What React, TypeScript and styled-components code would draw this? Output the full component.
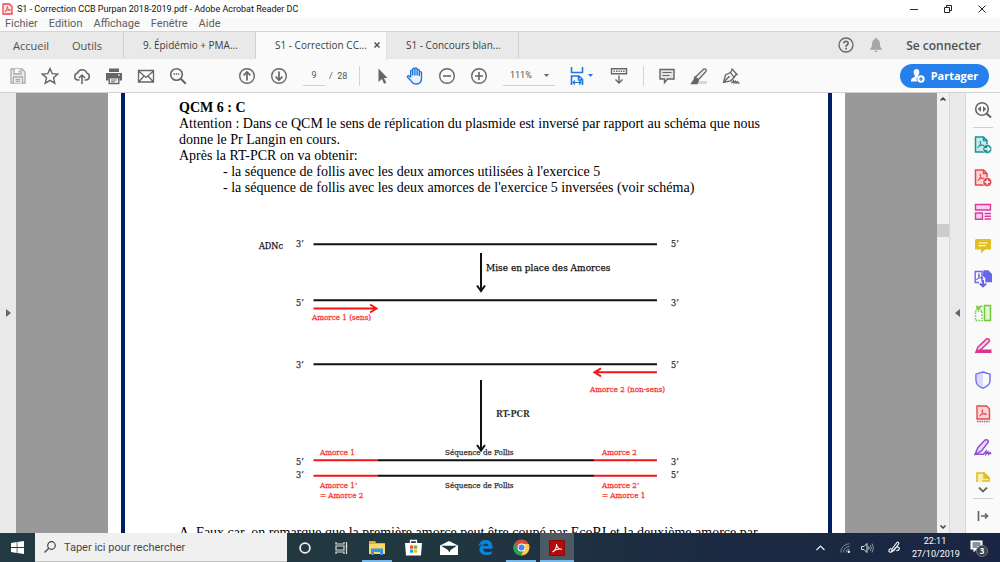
import React from "react";
import styled, { createGlobalStyle } from "styled-components";

const GlobalStyle = createGlobalStyle`
  * { box-sizing: border-box; }
  html, body { margin: 0; padding: 0; }
  body { font-family: "Open Sans", "Noto Sans", sans-serif; color: #4b4b4b; background: #fafafa; }
  button, input, select { font: inherit; color: inherit; margin: 0; padding: 0; border: 0; background: none; border-radius: 0; }
  a { color: inherit; text-decoration: none; }
  svg { display: block; flex: none; }
  p, h2, ul { margin: 0; padding: 0; }
`;

const Shell = styled.div`
  display: flex;
  flex-direction: column;
  height: 100vh;
  overflow: hidden;
`;

/* ---------- window chrome ---------- */

const TitleBar = styled.header`
  display: flex;
  align-items: center;
  height: 17px;
  padding: 0 1px 0 2px;
  background: #fff;
  color: #111;
  font-family: Roboto, sans-serif;
  font-size: 9px;
  gap: 4px;
`;

const WindowTitle = styled.span`
  flex: 1;
  white-space: nowrap;
`;

const WindowButtons = styled.div`
  display: flex;
`;

const WindowButton = styled.button`
  display: flex;
  align-items: center;
  justify-content: center;
  width: 34px;
  height: 16px;
`;

const MenuBar = styled.nav`
  display: flex;
  align-items: center;
  height: 14px;
  padding-left: 5px;
  gap: 11px;
  font-family: Roboto, sans-serif;
  font-size: 11px;
  line-height: 14px;
  color: #606060;
`;

const TabBar = styled.div`
  display: flex;
  align-items: stretch;
  height: 28px;
  border-top: 1px solid #d4d4d4;
  border-bottom: 1px solid #e4e4e4;
  background: #e9e9e9;
`;

const HomeTabs = styled.div`
  display: flex;
  align-items: center;
  width: 124px;
  padding-left: 13px;
  gap: 23px;
  border-right: 1px solid #d0d0d0;
`;

const HomeTab = styled.button`
  font-size: 11px;
  color: #505050;
`;

const Tab = styled.button<{ $active?: boolean }>`
  display: flex;
  align-items: center;
  width: ${(p) => (p.$active ? 131 : 132)}px;
  height: ${(p) => (p.$active ? 28 : 26)}px;
  padding: 0 0 ${(p) => (p.$active ? 2 : 0)}px 19px;
  gap: 7px;
  white-space: nowrap;
  background: ${(p) => (p.$active ? "#fafafa" : "#e9e9e9")};
  border-right: 1px solid ${(p) => (p.$active ? "#e0e0e0" : "#d0d0d0")};
  font-size: 10px;
  color: #404040;
`;

const AccountArea = styled.div`
  display: flex;
  align-items: center;
  margin-left: auto;
  padding-right: 19px;
  gap: 15px;
`;

const SignIn = styled.button`
  margin-left: 8px;
  font-size: 12px;
  font-weight: 600;
  color: #505050;
`;

/* ---------- toolbar ---------- */

const Toolbar = styled.div`
  display: flex;
  align-items: center;
  height: 34px;
  padding: 0 11px 0 2px;
  border-bottom: 1px solid #d2d2d2;
  color: #555;
  font-family: Roboto, sans-serif;
  font-size: 9px;
`;

const ToolGroup = styled.div<{ $start?: number }>`
  display: flex;
  align-items: center;
  margin-left: ${(p) => p.$start ?? 0}px;
`;

const ToolButton = styled.button<{ $wide?: boolean }>`
  display: flex;
  align-items: center;
  justify-content: center;
  width: ${(p) => (p.$wide ? 44 : 32)}px;
  height: 32px;
  gap: 4px;
`;

const PageInput = styled.input`
  width: 22px;
  height: 20px;
  border-bottom: 1px solid #d0d0d0;
  text-align: center;
`;

const PageCount = styled.span`
  width: 34px;
  padding-left: 4px;
  white-space: pre;
`;

const Divider = styled.span`
  width: 1px;
  height: 20px;
  background: #d4d4d4;
`;

const ZoomField = styled.label`
  display: flex;
  align-items: center;
  width: 52px;
  height: 20px;
  margin: 0 4px 0 8px;
  padding: 0 6px 0 7px;
  border-bottom: 1px solid #d0d0d0;
`;

const ZoomSelect = styled.select`
  appearance: none;
  flex: 1;
  width: 30px;
  outline: none;
`;

const ShareButton = styled.button`
  display: flex;
  align-items: center;
  justify-content: center;
  width: 89px;
  height: 24px;
  margin-left: auto;
  gap: 6px;
  border-radius: 12px;
  background: #2680eb;
  color: #fff;
  font-family: "Open Sans", sans-serif;
  font-size: 11px;
  font-weight: 700;
`;

/* ---------- document ---------- */

const Workspace = styled.div`
  display: flex;
  flex: 1;
  min-height: 0;
`;

const PanelHandle = styled.button<{ $side: "left" | "right" }>`
  display: flex;
  align-items: center;
  justify-content: center;
  width: ${(p) => (p.$side === "left" ? 16 : 17)}px;
  background: #e9e9e9;
  border-left: ${(p) => (p.$side === "right" ? "1px solid #d6d6d6" : "0")};
  border-right: ${(p) => (p.$side === "right" ? "1px solid #d6d6d6" : "0")};
`;

const Viewer = styled.main`
  display: flex;
  flex: 1;
  justify-content: center;
  min-width: 0;
  overflow: hidden;
  background: #999;
`;

const Page = styled.article`
  flex: 0 1 737px;
  padding: 0 13px;
  background: #fff;
`;

const PageFrame = styled.div`
  min-height: 100%;
  padding: 7px 50px 0 54px;
  border: solid #001f60;
  border-width: 0 4px;
  color: #000;
  font-family: "Liberation Serif", serif;
  font-size: 14px;
  line-height: 16px;
`;

const Question = styled.h2`
  font-size: 14px;
  line-height: 16px;
`;

const Answers = styled.ul`
  list-style: none;
  padding-left: 44px;
`;

const Figure = styled.svg`
  margin: 34px 0 0 71px;
  font-family: "DejaVu Serif Condensed", "DejaVu Serif", serif;
`;

const Explanation = styled.p`
  margin-top: 1px;
  white-space: nowrap;
`;

const Scrollbar = styled.div`
  display: flex;
  flex-direction: column;
  align-items: center;
  justify-content: space-between;
  width: 12px;
  padding: 4px 0;
  background: #f0f0f0;
`;

const ScrollTrack = styled.div`
  display: grid;
  grid-template-rows: 3fr auto 7fr;
  flex: 1;
  width: 100%;
`;

const ScrollThumb = styled.div`
  grid-row: 2;
  height: 13px;
  background: #cdcdcd;
`;

/* ---------- right tool rail ---------- */

const Rail = styled.aside`
  display: flex;
  flex-direction: column;
  align-items: center;
  width: 34px;
  background: #fafafa;
`;

const RailButton = styled.button<{ $size?: number }>`
  display: flex;
  align-items: center;
  justify-content: center;
  width: 34px;
  height: ${(p) => p.$size ?? 34}px;
  overflow: hidden;
`;

const RailList = styled.div`
  display: flex;
  flex: 1;
  flex-direction: column;
  min-height: 0;
  > button { flex: 1 1 0; min-height: 0; }
`;

const ClippedTool = styled.button`
  display: flex;
  align-items: flex-start;
  justify-content: center;
  width: 34px;
  height: 18px;
  padding-top: 8px;
  overflow: hidden;
`;

const RailRule = styled.span`
  width: 20px;
  height: 1px;
  background: #d0d0d0;
`;

/* ---------- taskbar ---------- */

const Taskbar = styled.footer`
  display: flex;
  align-items: stretch;
  height: 29px;
  background: linear-gradient(90deg, #213942 0%, #213740 45%, #1c2c42 65%, #1a2543 100%);
  color: #fff;
`;

const StartButton = styled.button`
  display: flex;
  align-items: center;
  justify-content: center;
  width: 35px;
`;

const SearchBox = styled.label`
  display: flex;
  align-items: center;
  width: 252px;
  padding-left: 9px;
  gap: 8px;
  background: #f0f0f0;
  border-bottom: 1px solid #c4c4c4;
`;

const SearchInput = styled.input`
  flex: 1;
  min-width: 0;
  font-family: Roboto, sans-serif;
  font-size: 11px;
  color: #444;
  outline: none;
  &::placeholder { color: #484848; opacity: 1; }
`;

const AppButton = styled.button<{ $running?: boolean; $focused?: boolean }>`
  display: flex;
  align-items: center;
  justify-content: center;
  width: 36px;
  ${(p) => p.$running && "box-shadow: inset 0 -2px #76b9ed; margin: 0 3px; width: 30px;"}
  ${(p) => p.$focused && "background: #4c5a64; margin: 0 1px; width: 34px;"}
`;

const Tray = styled.div`
  display: flex;
  align-items: center;
  margin-left: auto;
`;

const TrayButton = styled.button<{ $w: number }>`
  display: flex;
  align-items: center;
  justify-content: center;
  width: ${(p) => p.$w}px;
  height: 100%;
`;

const Clock = styled.time`
  width: 46px;
  text-align: center;
  font-family: Roboto, sans-serif;
  font-size: 9px;
  line-height: 13px;
`;

/* ---------- icons ---------- */

const Svg = ({ w = 18, h = w, vb = 18, c = "#666", sw = 1.5, children }: {
  w?: number; h?: number; vb?: number; c?: string; sw?: number; children: React.ReactNode;
}) => (
  <svg width={w} height={h} viewBox={`0 0 ${vb} ${(vb * h) / w}`} fill="none" stroke={c} strokeWidth={sw} aria-hidden="true">
    {children}
  </svg>
);

const PdfCurve = ({ x = 0, y = 0 }: { x?: number; y?: number }) => (
  <path strokeWidth="1" transform={`translate(${x} ${y})`} d="M0 6.5C2 5.5 3.2 2.8 3.2 0.8C3.2-.3 2.2 0 2.6 1.3C3 3.2 4.6 5 6.6 5C7.6 4.9 7 4 5.3 4.2C3.3 4.4 1.6 5 .3 6.2" />
);

const Caret = ({ c = "#666" }: { c?: string }) => (
  <svg width="5" height="3" viewBox="0 0 5 3" aria-hidden="true"><path d="M0 0h5L2.500 3z" fill={c} /></svg>
);

const icons = {
  save: (
    <Svg c="#aaa" sw={1.3}>
      <path fill="#eee" d="M2 2h11l3 3v11H2z" /><path fill="#fafafa" d="M5 2v5h7V2M4.500 16v-6h9v6M6.500 12.500h5M6.500 14.500h5" /><path d="M10 3.500v2" />
    </Svg>
  ),
  star: <Svg sw={1.4}><path d="M9 1.500l2.200 5.100 5.500.5-4.200 3.600 1.300 5.500L9 13.300l-4.800 2.900 1.300-5.500L1.300 7.100l5.500-.5z" /></Svg>,
  cloud: <Svg sw={1.5}><path d="M6.500 13H5A3.600 3.600 0 0 1 4.600 5.900 4.800 4.800 0 0 1 13.700 6 3.600 3.600 0 0 1 13.300 13H11.500M9 17V8.500M6 11l3-3 3 3" /></Svg>,
  print: (
    <Svg sw={0}>
      <path fill="#666" d="M4 1.500h10V5H4zM1 6h16v7.500h-2.500V11h-11v2.500H1z" />
      <path fill="#fff" stroke="#666" strokeWidth="1.400" d="M4.200 10.700h9.600v5.800H4.200z" /><path stroke="#666" strokeWidth="1" d="M6 13h6M6 14.800h4" /><path stroke="#fff" strokeWidth="1" d="M13 8h2" />
    </Svg>
  ),
  mail: <Svg sw={1.3}><path d="M1.500 3.500h15v11.500h-15zM1.500 4l7.500 6.500L16.500 4M1.500 15l5.500-6M16.500 15L11 9" /></Svg>,
  find: <Svg sw={1.6}><circle cx="7.500" cy="7.500" r="5.800" /><path strokeWidth="2" d="M11.800 11.800l5 5" /><path strokeWidth="1.300" strokeDasharray="1.400 .8" d="M4.500 7h6.400" /></Svg>,
  up: <Svg sw={1.4}><circle cx="9" cy="9" r="7.300" /><path strokeWidth="1.700" d="M9 13.500V5.500M5.600 8.400L9 5l3.400 3.400" /></Svg>,
  down: <Svg sw={1.4}><circle cx="9" cy="9" r="7.300" /><path strokeWidth="1.700" d="M9 4.500v8M5.600 9.600L9 13l3.400-3.400" /></Svg>,
  pointer: <Svg w={18}><path stroke="none" fill="#666" d="M4.500 1.500l9 9.500H10l2.300 4.700-2.200 1L7.900 12l-3.400 3z" /></Svg>,
  hand: (
    <Svg c="#2078d8" sw={1.400}>
      <path fill="#eaf4fd" strokeLinejoin="round" d="M4.700 10V4.200c0-1.400 1.900-1.400 2 0V2.300c.1-1.400 2-1.400 2.200 0v-.4c.1-1.200 2-1.200 2.200.1v1.200c.2-1.200 2-1.100 2.200.2v2c.3-1.100 2.100-1 2.200.3v5.500c0 3.800-2 5.800-5.200 5.800-3 0-4.300-1.200-5.500-3.500L1.500 10.300c-.6-1.300 1-2 1.900-1zM6.700 4v4.500M8.900 2.500v6M11.100 3v5.500M13.300 5v4" />
    </Svg>
  ),
  minus: <Svg sw={1.4}><circle cx="9" cy="9" r="7.300" /><path strokeWidth="1.600" d="M5 9h8" /></Svg>,
  plus: <Svg sw={1.4}><circle cx="9" cy="9" r="7.300" /><path strokeWidth="1.600" d="M5 9h8M9 5v8" /></Svg>,
  fit: (
    <Svg w={14} h={18} vb={14} c="#2078d8" sw={1.600}>
      <path d="M1.500 0v5.500h11V0M1.500 18V9h7.500l3.500 3.500V18M8.500 9v4h4" /><path strokeWidth="1.200" d="M3 15.500h8M5 13.500l-2 2 2 2M9 13.500l2 2-2 2" />
    </Svg>
  ),
  keyboard: <Svg sw={1.400}><path d="M1.500 1.700h15v5h-15z" /><path strokeWidth="1.500" strokeDasharray="1.400 1" d="M3.600 4.200h11" /><path d="M9 8.500v7M5.500 12.500L9 16l3.500-3.500" /></Svg>,
  comment: <Svg sw={1.400}><path fill="#e4e4e4" d="M2 2.500h14v9.500H9.500L6.500 15.500V12H2z" /><path strokeWidth="1.100" d="M4.500 5.500h9M4.500 8.500h7" /></Svg>,
  marker: <Svg sw={1.300}><path stroke="none" fill="#d8d8d8" d="M7 14h10v3H5z" /><path fill="#eee" d="M5 10.500l8.500-8.300c2-.9 3.300.5 2.500 2.300L8 13z" /><path fill="#666" d="M5 10l-1 3-2.500 3.500h5.500l1.500-3.500z" /></Svg>,
  pen: (
    <Svg sw={1.300}>
      <path fill="#f2f2f2" d="M1.500 15.500L3.500 8 8.500 5.500 12 10.500 8.500 14z" />
      <path d="M1.500 15.500L6 10.800" /><circle cx="6.700" cy="10" r="1" fill="#666" stroke="none" />
      <path d="M8.500 5.500L10.500 2M12 10.500l2.500-3.500M9.500 1.500L15.500 8" />
      <path d="M9.500 16l2-2.500.5 2.500 1.500-1.800.6 1.800 1.400-1.300.6 1.300H17.500" />
    </Svg>
  ),
};

const SheetIcon = ({ c, fill, badge }: { c: string; fill: string; badge: "arrow" | "plus" }) => (
  <Svg c={c} sw={1.500}>
    <path fill={fill} d="M1.500 1h8l3.500 3.500v11.500H1.500z" /><path d="M9.500 1V4.500H13" /><PdfCurve x={3.500} y={5} />
    <circle cx="13.300" cy="13" r="4.500" fill={c} stroke="#fafafa" strokeWidth=".6" />
    <path stroke="#fff" strokeWidth="1.400" d={badge === "plus" ? "M10.700 13h5.200M13.300 10.400v5.200" : "M10.500 13h5M13.500 10.800l2.200 2.200-2.200 2.200"} />
  </Svg>
);

const railTools: { label: string; icon: React.ReactNode }[] = [
  { label: "Exporter un fichier PDF", icon: <SheetIcon c="#19929b" fill="#c9e9e9" badge="arrow" /> },
  { label: "Créer un fichier PDF", icon: <SheetIcon c="#e34850" fill="#fbd5d6" badge="plus" /> },
  { label: "Modifier le fichier PDF", icon: <Svg c="#d83aa0" sw={1.400}><path fill="#f7d3ea" d="M1.500 1.500h15v5.500h-15zM1.500 10H8.500V16.300H1.500z" /><path d="M10.500 10.500h6.500M10.500 13.200h6.500M10.500 16h6.500" /></Svg> },
  { label: "Commentaire", icon: <Svg c="#dfbf22" sw={0}><path fill="#dfbf22" d="M2 2h14a1 1 0 0 1 1 1V12.500H11l-4 4v-4H1V3z" /><path stroke="#fff" strokeWidth="1.200" d="M4.500 6h9M4.500 8.700h7" /></Svg> },
  { label: "Combiner les fichiers", icon: <Svg c="#6767ec" sw={1.400}><path d="M5 12.500H1.200V1.500H8V12" /><PdfCurve x={2} y={3.500} /><path fill="#6767ec" d="M10 1h4l3.500 3.500v7H12V8L9.500 5.500z" /><path strokeWidth="2" d="M9 10v6M5.800 13.500L9 16.500l3.200-3" /></Svg> },
  { label: "Organiser les pages", icon: <Svg c="#72c93a" sw={1.500}><path fill="#e0f5d2" d="M10.500 1.500h6v15h-6z" /><path strokeDasharray="1.500 1.200" d="M8 7H1.500v9.500H8z" /><path d="M8.500 2.500C6 2 4.500 3 3.500 5M3 1.500V5h3.500" /></Svg> },
  { label: "Biffer", icon: <Svg c="#d83790" sw={1.500}><path fill="#d83790" stroke="none" d="M7 12.500h10.500V16H.500z" /><path fill="#f7d3e6" d="M4 10l8.500-8c2.200-.8 3.500.8 2.700 2.500L7 12.500 2 15z" /></Svg> },
  { label: "Protéger", icon: <Svg c="#6767ec" sw={1.400}><path fill="#fafafa" d="M9 1l7 2.200v6c0 4-3 6.500-7 8-4-1.500-7-4-7-8v-6z" /><path stroke="none" fill="#d9d9fa" d="M9 2v14.300c-3.500-1.300-6.200-3.600-6.200-7.200V3.800z" /></Svg> },
  { label: "Optimiser le fichier PDF", icon: <Svg c="#e34850" sw={1.400}><path fill="#fbd5d6" d="M3 1h9.500L15.500 4V14H3z" /><PdfCurve x={5.500} y={4.500} /><path strokeWidth="1.300" strokeDasharray="1.500 .8" d="M3 16.500h12.500" /></Svg> },
  { label: "Remplir et signer", icon: <Svg c="#8d4fd3" sw={1.500}><path fill="#ead9fa" d="M1 16.300L4 9.500 11 2c2-1 3.800.5 3 2.500L7.500 13z" /><path d="M1 16.300h8.500l2.500-3v3l2-2.500.7 2.500 1.500-1.500.8 1.200" /></Svg> },
];

const tb = (l: string, icon: React.ReactNode) => <ToolButton aria-label={l}>{icon}</ToolButton>;

/* ---------- PCR diagram ---------- */

const black = { stroke: "#111", strokeWidth: 2 };
const red = { stroke: "#f01818", strokeWidth: 2 };

const PcrDiagram = () => (
  <Figure width="440" height="294" viewBox="250 230 440 294" fill="none" role="img" aria-label="Amplification par RT-PCR">
    <g {...black}>
      <path d="M313.500 244.300H657M313.500 300.300H657M313.500 364.300H657M378 460.200H594M378 475.700H594" />
      <path d="M481 253v37M477 285.500l4 5.500 4-5.500M481 380v70M477 445l4 5.500 4-5.500" />
    </g>
    <g {...red}>
      <path d="M313.500 308.500H376M370 304.500l6.500 4-6.500 4M657 372.300H595M601 368.300l-6.500 4 6.500 4" />
      <path d="M313.500 460.200H378M594 460.200H657M313.500 475.700H378M594 475.700H657" />
    </g>
    <g fill="#333" stroke="#333" strokeWidth=".25" fontSize="9">
      <text x="296" y="247">3’</text><text x="671" y="247">5’</text>
      <text x="296" y="306">5’</text><text x="671" y="306">3’</text>
      <text x="296" y="368">3’</text><text x="671" y="368">5’</text>
      <text x="296" y="465">5’</text><text x="671" y="465">3’</text>
      <text x="296" y="478">3’</text><text x="671" y="478">5’</text>
    </g>
    <g fill="#111" stroke="#111" strokeWidth=".25" fontSize="9">
      <text x="259" y="249">ADNc</text>
      <text x="486" y="271" fontSize="10">Mise en place des Amorces</text>
      <text x="496" y="417" fontWeight="bold" fill="#333" stroke="none">RT-PCR</text>
    </g>
    <g fill="#333" stroke="#333" strokeWidth=".25" fontSize="8">
      <text x="445" y="455">Séquence de Follis</text>
      <text x="445" y="488">Séquence de Follis</text>
    </g>
    <g fill="#f83a3a" stroke="#f83a3a" strokeWidth=".3" fontSize="8">
      <text x="312" y="320">Amorce 1 (sens)</text>
      <text x="590" y="392">Amorce 2 (non-sens)</text>
      <text x="320" y="455">Amorce 1</text><text x="602" y="455">Amorce 2</text>
      <text x="320" y="488">Amorce 1’</text><text x="602" y="488">Amorce 2’</text>
      <text x="320" y="498">= Amorce 2</text><text x="602" y="498">= Amorce 1</text>
    </g>
  </Figure>
);

export default function App() {
  return (
    <Shell>
      <GlobalStyle />
      <TitleBar>
        <Svg w={11} h={12} vb={11} c="#f0424a" sw={1.300}><path fill="#fde4e4" d="M1 1h6.500L10 3.500V11H1z" /><path d="M3 8.500C5 7 5.500 5 5.300 3.500 5.500 6 6.500 7.200 8.500 7.200 6.500 6.500 4.500 7.300 3 8.500z" strokeWidth=".9" /></Svg>
        <WindowTitle>S1 - Correction CCB Purpan 2018-2019.pdf - Adobe Acrobat Reader DC</WindowTitle>
        <WindowButtons>
          <WindowButton aria-label="Réduire"><Svg w={8} vb={8} c="#333" sw={1}><path d="M0 4.500h8" /></Svg></WindowButton>
          <WindowButton aria-label="Restaurer"><Svg w={8} vb={8} c="#222" sw={1}><path d="M.5 2.500h5v5h-5zM2.500 2.500v-2h5v5h-2" /></Svg></WindowButton>
          <WindowButton aria-label="Fermer"><Svg w={8} vb={8} c="#222" sw={1}><path d="M.5.5l7 7M7.500.5l-7 7" /></Svg></WindowButton>
        </WindowButtons>
      </TitleBar>

      <MenuBar>
        {["Fichier", "Edition", "Affichage", "Fenêtre", "Aide"].map((m) => <a key={m} href="#menu">{m}</a>)}
      </MenuBar>

      <TabBar>
        <HomeTabs><HomeTab>Accueil</HomeTab><HomeTab>Outils</HomeTab></HomeTabs>
        <Tab>9. Épidémio + PMA...</Tab>
        <Tab $active>S1 - Correction CC...<Svg w={6} vb={6} c="#555" sw={1.500}><path d="M.5.5l5 5M5.500.5l-5 5" /></Svg></Tab>
        <Tab>S1 - Concours blan...</Tab>
        <AccountArea>
          <Svg w={16} vb={16} sw={1.300}><circle cx="8" cy="8" r="7" /><path strokeWidth="1.700" d="M5.800 6.300C5.800 3.500 10.300 3.700 10.200 6.300 10.200 7.700 8 7.800 8 9.700M8 10.800v1.700" /></Svg>
          <Svg w={14} h={16} vb={14} sw={0}><path fill="#a6a6a6" d="M7 1c.9 0 1.200.6 1.200 1.300C10.500 3 11 5 11 7.500c0 2.500.8 3.500 2 4.500v.8H1V12c1.200-1 2-2 2-4.500C3 5 3.500 3 5.800 2.300 5.800 1.600 6.100 1 7 1zM5.500 13.500h3c0 2-3 2-3 0z" /></Svg>
          <SignIn>Se connecter</SignIn>
        </AccountArea>
      </TabBar>

      <Toolbar>
        <ToolGroup>
          {tb("Enregistrer", icons.save)}{tb("Favoris", icons.star)}{tb("Envoyer vers le cloud", icons.cloud)}
          {tb("Imprimer", icons.print)}{tb("Courrier", icons.mail)}{tb("Rechercher", icons.find)}
        </ToolGroup>
        <ToolGroup $start={37}>
          {tb("Page précédente", icons.up)}{tb("Page suivante", icons.down)}
        </ToolGroup>
        <ToolGroup $start={8}>
          <PageInput aria-label="Page" defaultValue="9" />
          <PageCount>{"/  28"}</PageCount>
          <Divider />
        </ToolGroup>
        <ToolGroup $start={7}>
          {tb("Sélection", icons.pointer)}{tb("Main", icons.hand)}{tb("Zoom arrière", icons.minus)}{tb("Zoom avant", icons.plus)}
          <ZoomField>
            <ZoomSelect aria-label="Zoom" defaultValue="111%"><option>111%</option></ZoomSelect>
            <Caret />
          </ZoomField>
          <ToolButton $wide aria-label="Ajuster">{icons.fit}<Caret c="#2078d8" /></ToolButton>
          {tb("Clavier", icons.keyboard)}
        </ToolGroup>
        <ToolGroup $start={8}>
          <Divider />
        </ToolGroup>
        <ToolGroup $start={7}>
          {tb("Commentaire", icons.comment)}{tb("Surligner", icons.marker)}{tb("Signer", icons.pen)}
        </ToolGroup>
        <ShareButton>
          <Svg w={14} vb={14} sw={0}><path fill="#fff" d="M5.500 0C9 0 8.800 4.500 7.300 6.200v1C4.800 9 5.500 11 6.500 12.500H0C0 9.500 1 9 3.700 8V6.200C2.200 4.500 2 0 5.500 0z" /><circle cx="10" cy="10" r="3.700" fill="#fff" /><path stroke="#2680eb" strokeWidth="1.200" d="M8 10h4M10 8v4" /></Svg>
          Partager
        </ShareButton>
      </Toolbar>

      <Workspace>
        <PanelHandle $side="left" aria-label="Ouvrir le volet"><Svg w={5} h={8} vb={5} sw={0}><path fill="#666" d="M0 0v8l5-4z" /></Svg></PanelHandle>
        <Viewer>
          <Page>
            <PageFrame>
              <Question>QCM 6 : C</Question>
              <p>Attention : Dans ce QCM le sens de réplication du plasmide est inversé par rapport au schéma que nous donne le Pr Langin en cours.</p>
              <p>Après la RT-PCR on va obtenir:</p>
              <Answers>
                <li>- la séquence de follis avec les deux amorces utilisées à l'exercice 5</li>
                <li>- la séquence de follis avec les deux amorces de l'exercice 5 inversées (voir schéma)</li>
              </Answers>
              <PcrDiagram />
              <Explanation>A. Faux car, on remarque que la première amorce peut être coupé par EcoRI et la deuxième amorce par</Explanation>
            </PageFrame>
          </Page>
        </Viewer>
        <Scrollbar>
          <Svg w={6} h={4} vb={6} c="#444" sw={1.500}><path d="M.5 3.500L3 1l2.500 2.500" /></Svg>
          <ScrollTrack><ScrollThumb /></ScrollTrack>
          <Svg w={6} h={4} vb={6} c="#444" sw={1.500}><path d="M.5.500L3 3 5.500.5" /></Svg>
        </Scrollbar>
        <PanelHandle $side="right" aria-label="Fermer le volet"><Svg w={5} h={8} vb={5} sw={0}><path fill="#666" d="M5 0v8L0 4z" /></Svg></PanelHandle>
        <Rail>
          <RailButton aria-label="Rechercher des outils">
            <Svg sw={1.600}><circle cx="8" cy="8" r="6.300" /><path strokeWidth="2.200" d="M12.500 12.500l4.500 4" /><path stroke="none" fill="#666" d="M7 5v6L3.800 8zM9 5v6l3.200-3z" /></Svg>
          </RailButton>
          <RailRule />
          <RailList>
            {railTools.map((t) => <RailButton key={t.label} aria-label={t.label}>{t.icon}</RailButton>)}
          </RailList>
          <ClippedTool aria-label="Plus de formats">
            <Svg w={14} vb={14} c="#dfbf22" sw={1.600}><path fill="#f8edb5" d="M1 14V1h7l5 5v3H6" /><path fill="#dfbf22" d="M8 1v5h5z" /></Svg>
          </ClippedTool>
          <RailButton $size={16} aria-label="Défiler vers le bas"><Svg w={10} h={6} vb={10} sw={1.800}><path d="M1 .5l4 4 4-4" /></Svg></RailButton>
          <RailRule />
          <RailButton aria-label="Réduire le volet"><Svg w={12} vb={12} sw={1.700}><path d="M1.500 1v10M4 6h6.500M8 3.500L10.500 6 8 8.500" /></Svg></RailButton>
        </Rail>
      </Workspace>

      <Taskbar>
        <StartButton aria-label="Démarrer"><Svg w={13} vb={13} sw={0}><path fill="#fff" d="M0 2l5.700-.9v5H0zM6.400 1L13 0v6.100H6.400zM0 6.900h5.700v5L0 11zM6.400 6.900H13V13l-6.600-1z" /></Svg></StartButton>
        <SearchBox>
          <Svg w={12} vb={12} c="#444" sw={1.200}><circle cx="7.500" cy="4.500" r="3.800" /><path d="M4.800 7.300L.5 11.500" /></Svg>
          <SearchInput aria-label="Rechercher" placeholder="Taper ici pour rechercher" />
        </SearchBox>
        <AppButton aria-label="Cortana"><Svg w={12} vb={12} c="#eee" sw={1.800}><circle cx="6" cy="6" r="4.900" /></Svg></AppButton>
        <AppButton aria-label="Affichage des tâches"><Svg w={13} h={12} vb={13} c="#ddd" sw={1.200}><path d="M1 0v2h8V0M1 12v-2h8v2M1 4h8v4H1zM11.500 0v12M10.500 4h2" /></Svg></AppButton>
        <AppButton $running aria-label="Explorateur de fichiers">
          <Svg w={16} h={14} vb={16} sw={0}><path fill="#e8ad2e" d="M0 0h6l1.500 2H16v4H0z" /><path fill="#fbd766" d="M0 3h16v10H0z" /><path fill="#3b94d9" d="M2 7.500h12V14h-3v-3H5v3H2z" /></Svg>
        </AppButton>
        <AppButton aria-label="Store">
          <Svg w={17} h={17} vb={17} sw={0}><path stroke="#fff" strokeWidth="1.300" d="M5.500 5V1.500h6V5" /><path fill="#fff" d="M0 4h17l-1 12.500H1z" /><path fill="#e8502c" d="M5 6.500h3.200v3.200H5z" /><path fill="#75b72b" d="M9 6.500h3.200v3.200H9z" /><path fill="#229fe2" d="M5 10.500h3.200v3.200H5z" /><path fill="#f5b81f" d="M9 10.500h3.200v3.200H9z" /></Svg>
        </AppButton>
        <AppButton aria-label="Courrier"><Svg w={18} h={14} vb={18} sw={0}><path fill="#fff" d="M0 4.500L9 0l9 4.500V14H0z" /><path fill="#213740" d="M1 4.800h16L10.500 9l-1 2.500L8 9z" /></Svg></AppButton>
        <AppButton aria-label="Edge"><Svg w={15} vb={15} sw={0}><path fill="#0d84dc" d="M.5 7C1 2.500 4 0 7.800 0 12.500 0 14.500 3.500 14.500 7v1.700H5.200c.2 4 5 4.500 8.300 2.500v2.700C8 16.500 1.500 14.500 1.500 9.500c0-2.800 1.700-5 4-5.800C3.500 3.800 1.500 5 .5 7zM5.300 6h5.200C10.400 2.500 5.700 2.500 5.300 6z" /></Svg></AppButton>
        <AppButton $running aria-label="Chrome">
          <Svg w={17} vb={17} sw={0}><circle cx="8.500" cy="8.500" r="8" fill="#dd4b3e" /><path fill="#f8cf47" d="M8.500 5h7.200C18 10 14.500 16.500 8 16.500L11.500 10z" /><path fill="#2da15a" d="M1.600 4.400L5.500 10.400 9.500 12 8 16.500C1.500 16-1.500 10 1.600 4.400z" /><circle cx="8.500" cy="8.500" r="3.900" fill="#fff" /><circle cx="8.500" cy="8.500" r="3" fill="#4688f1" /></Svg>
        </AppButton>
        <AppButton $running $focused aria-label="Acrobat Reader">
          <Svg w={16} vb={16} c="#fff" sw={1.100}><path fill="#b30b0b" stroke="#8b0808" strokeWidth="1" d="M.5.500h15v15H.5z" /><path d="M3.500 12C6 11 8 7 7.500 4M7.500 4c0 3 2.500 5.500 5.500 5.300C10 8.500 6 9.500 3.500 12" /></Svg>
        </AppButton>

        <Tray>
          <TrayButton $w={24} aria-label="Icônes cachées"><Svg w={9} h={6} vb={9} c="#eee" sw={1.200}><path d="M.5 5l4-4 4 4" /></Svg></TrayButton>
          <TrayButton $w={26} aria-label="Réseau"><Svg w={10} vb={10} c="#7f8894" sw={1}><path d="M.7 9.500A9 9 0 0 1 9.500.7M3.500 9.500a6 6 0 0 1 6-6M6 9.500a3.500 3.500 0 0 1 3.500-3.500" /><circle cx="8.800" cy="8.800" r="1.200" fill="#fff" stroke="none" /></Svg></TrayButton>
          <TrayButton $w={18} aria-label="Volume"><Svg w={13} h={10} vb={13} c="#ddd" sw={1}><path d="M.5 3.500H3l3-3v9l-3-3H.5zM7.500 3.500q1.200 1.500 0 3" /><path stroke="#8a93a0" d="M9.300 2q2 3 0 6M11 .5q3 4.500 0 9" /></Svg></TrayButton>
          <TrayButton $w={36} aria-label="Stylet"><Svg w={13} vb={13} c="#eee" sw={1.200}><path d="M4 8L9 1.500c1-.8 2.200.3 1.700 1.300L6 9.500 3.700 10zM3.500 7.500C-.5 8 .5 12 3.500 11 7 9.500 6 6 9.500 6c3.500.3 1.500 4-1.200 3.500" /></Svg></TrayButton>
          <Clock>22:11<br />27/10/2019</Clock>
          <TrayButton $w={42} aria-label="Notifications">
            <Svg w={18} vb={18} sw={0}><path fill="#fff" d="M.5 1.500h12v9H6.500l-3 3v-3h-3z" /><path stroke="#1a2543" strokeWidth="1" d="M2.500 4h8M2.500 6h8M2.500 8h5" /><circle cx="12" cy="12" r="5.500" fill="#3a3f48" stroke="#888" strokeWidth=".8" /><text x="12" y="15" fontSize="8" fontWeight="bold" textAnchor="middle" fill="#fff">3</text></Svg>
          </TrayButton>
        </Tray>
      </Taskbar>
    </Shell>
  );
}
